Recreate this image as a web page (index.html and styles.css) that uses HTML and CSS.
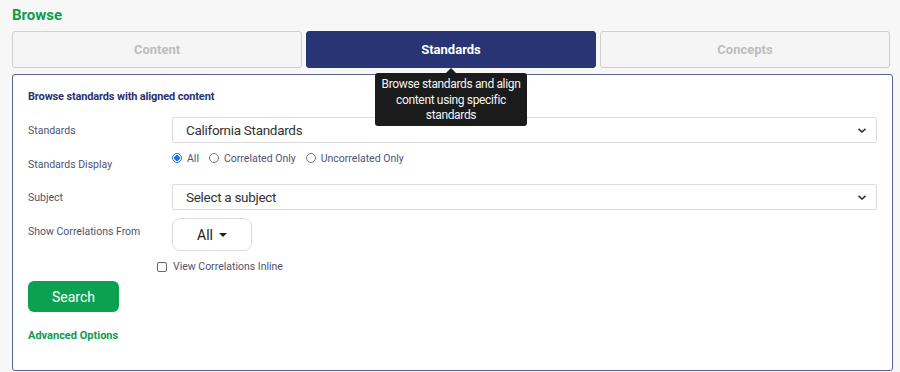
FILE: index.html
```html
<!DOCTYPE html>
<html lang="en">
<head>
    <meta charset="UTF-8">
    <title>Browse</title>
    <link rel="stylesheet" href="styles.css">
</head>
<body>
    <div class="strona">
        <h1 class="naglowek">Browse</h1>

        <div class="zakladki">
            <div class="zakladka">Content</div>
            <div class="zakladka aktywna">
                Standards
                <div class="dymek">Browse standards and align content using specific standards</div>
            </div>
            <div class="zakladka">Concepts</div>
        </div>

        <div class="panel">
            <div class="tytul">Browse standards with aligned content</div>

            <div class="formularz">
                <div class="etykieta">Standards</div>
                <div class="pole">
                    <div class="lista">
                        <span>California Standards</span>
                        <svg width="10" height="7" viewBox="0 0 10 7"><path d="M1.5 1.8 L5 5 L8.5 1.8" fill="none" stroke="#333" stroke-width="1.6"/></svg>
                    </div>
                </div>

                <div class="etykieta">Standards Display</div>
                <div class="pole">
                    <div class="radia">
                        <label><span class="radio wybrane"></span>All</label>
                        <label><span class="radio"></span>Correlated Only</label>
                        <label><span class="radio"></span>Uncorrelated Only</label>
                    </div>
                </div>

                <div class="etykieta">Subject</div>
                <div class="pole">
                    <div class="lista">
                        <span>Select a subject</span>
                        <svg width="10" height="7" viewBox="0 0 10 7"><path d="M1.5 1.8 L5 5 L8.5 1.8" fill="none" stroke="#333" stroke-width="1.6"/></svg>
                    </div>
                </div>

                <div class="etykieta">Show Correlations From</div>
                <div class="pole">
                    <div class="rozwin">All <span class="trojkat"></span></div>
                </div>

                <div></div>
                <div class="pole">
                    <label class="zaznacz"><span class="kwadrat"></span>View Correlations Inline</label>
                </div>
            </div>

            <div class="szukaj">Search</div>
            <div class="zaawansowane">Advanced Options</div>
        </div>
    </div>
</body>
</html>
```

FILE: styles.css
```css
*{
    box-sizing: border-box;
    font-family: Roboto, "Liberation Sans", sans-serif;
}
body{
    margin: 0;
    background-color: #f7f7f7;
}
.strona{
    padding: 6px 7px 0 12px;
}
.naglowek{
    margin: 0;
    font-size: 15px;
    line-height: 18px;
    color: #0c9c4c;
    font-weight: 700;
}

.zakladki{
    display: grid;
    grid-template-columns: 1fr 1fr 1fr;
    gap: 4px;
    margin-top: 7px;
    margin-right: 3px;
}
.zakladka{
    position: relative;
    height: 37px;
    display: flex;
    justify-content: center;
    align-items: center;
    font-size: 13px;
    font-weight: 700;
    color: #bdbdbd;
    background-color: #f5f5f5;
    border: 1px solid #cfcfcf;
    border-radius: 3px;
}
.aktywna{
    background-color: #283473;
    border-color: #283473;
    color: white;
}
.dymek{
    position: absolute;
    top: 41px;
    left: 50%;
    transform: translateX(-50%);
    width: 152px;
    padding: 4px 4px 2px 4px;
    background-color: #1b1b1b;
    color: #f4f4f4;
    font-size: 12px;
    letter-spacing: -0.35px;
    font-weight: 400;
    line-height: 15.5px;
    text-align: center;
    border-radius: 3px;
    z-index: 2;
}
.dymek::before{
    content: "";
    position: absolute;
    top: -5px;
    left: 50%;
    margin-left: -5px;
    border-left: 5px solid transparent;
    border-right: 5px solid transparent;
    border-bottom: 5px solid #1b1b1b;
}

.panel{
    margin-top: 6px;
    height: 297px;
    background-color: white;
    border: 1px solid #5b6198;
    border-radius: 3px;
    padding: 15px 15px 0 15px;
}
.tytul{
    font-size: 11px;
    line-height: 14px;
    font-weight: 700;
    letter-spacing: -0.15px;
    color: #2b3270;
}

.formularz{
    display: grid;
    grid-template-columns: 144px 1fr;
    row-gap: 8px;
    margin-top: 13px;
}
.etykieta{
    font-size: 10.5px;
    line-height: 14px;
    padding-top: 7px;
    color: #4f5370;
}
.lista{
    height: 26px;
    display: flex;
    justify-content: space-between;
    align-items: center;
    padding: 0 9px 0 13px;
    border: 1px solid #dcdcdc;
    border-radius: 2px;
    font-size: 13.5px;
    letter-spacing: -0.3px;
    color: #333;
}
.radia{
    display: flex;
    gap: 10px;
    height: 25px;
}
.radia label, .zaznacz{
    display: flex;
    align-items: center;
    gap: 5px;
    height: 14px;
    font-size: 10.5px;
    color: #4f5370;
}
.radio{
    width: 10px;
    height: 10px;
    border: 1px solid #777;
    border-radius: 50%;
}
.wybrane{
    border-color: #1a73e8;
    background: radial-gradient(circle, #1a73e8 0 2.6px, white 3px);
}
.rozwin{
    width: 80px;
    height: 33px;
    display: flex;
    justify-content: center;
    align-items: center;
    gap: 6px;
    border: 1px solid #dcdcdc;
    border-radius: 8px;
    font-size: 14px;
    color: #222;
}
.trojkat{
    border-left: 4px solid transparent;
    border-right: 4px solid transparent;
    border-top: 4px solid #222;
}
.zaznacz{
    margin-left: -15px;
    gap: 6px;
}
.kwadrat{
    width: 10px;
    height: 10px;
    border: 1px solid #666;
    border-radius: 2px;
    margin-top: 2px;
}

.szukaj{
    margin-top: 8px;
    width: 91px;
    height: 31px;
    display: flex;
    justify-content: center;
    align-items: center;
    background-color: #0ba150;
    color: white;
    font-size: 14px;
    border-radius: 6px;
}
.zaawansowane{
    margin-top: 17px;
    font-size: 11px;
    line-height: 14px;
    font-weight: 700;
    color: #0c9c4c;
}
```
